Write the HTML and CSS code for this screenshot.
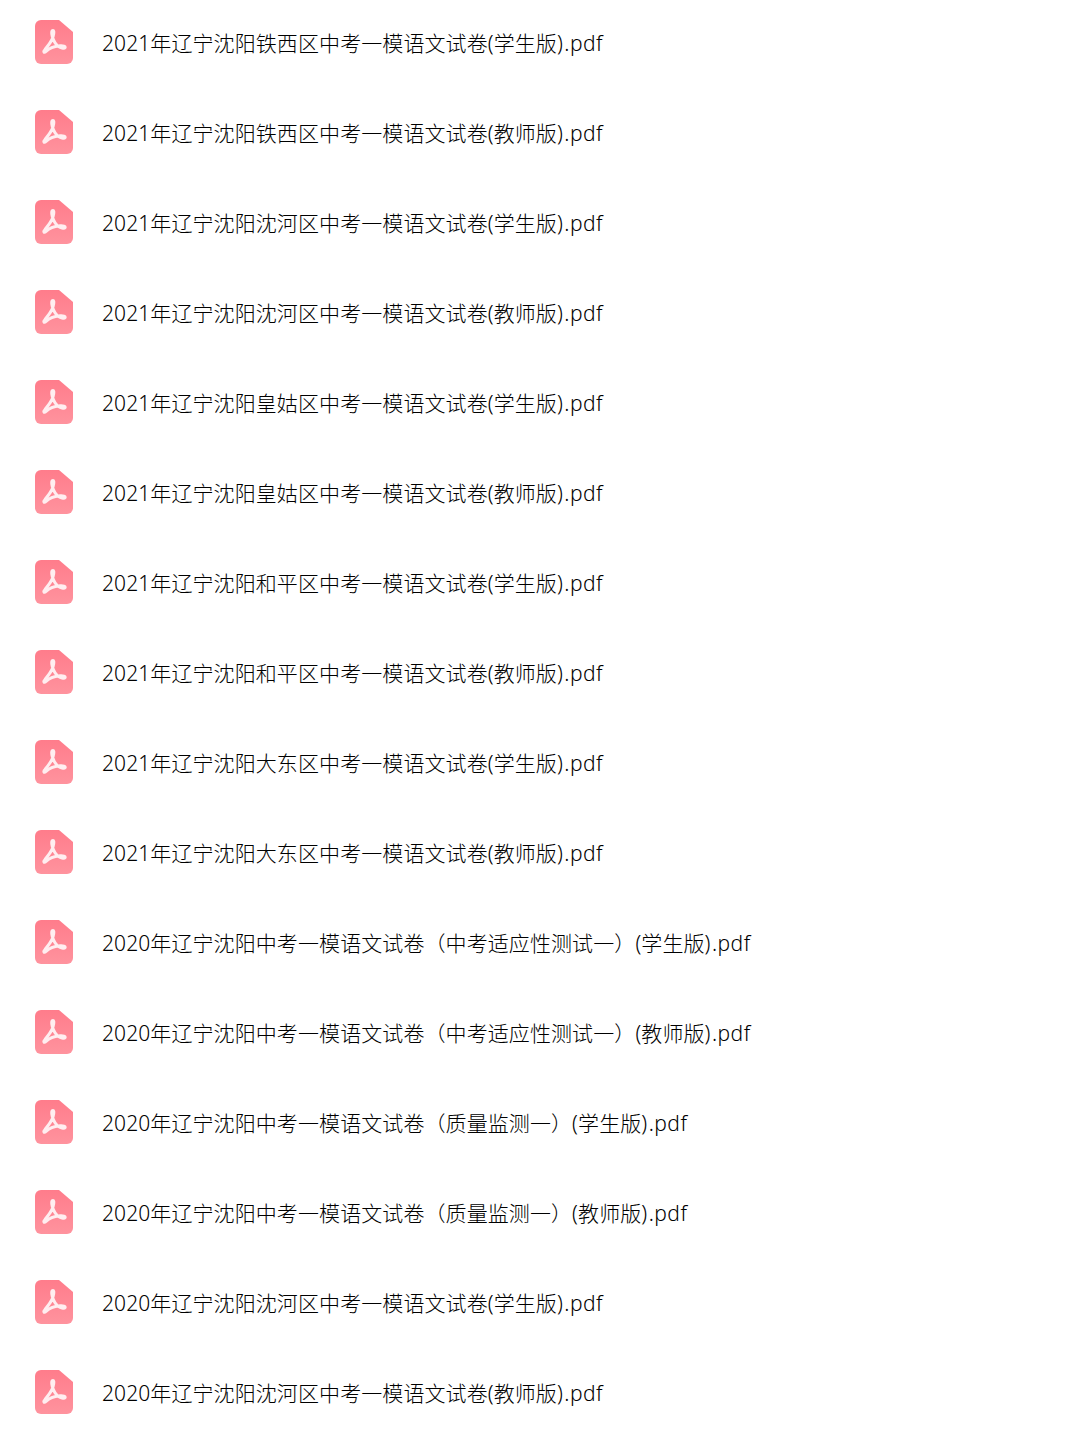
FILE: index.html
```html
<!DOCTYPE html>
<html lang="zh-CN">
<head>
    <meta charset="UTF-8">
    <title>2021年辽宁沈阳中考一模语文试卷</title>
    <link rel="stylesheet" href="styles.css">
</head>
<body>
    <svg class="defs" width="0" height="0">
        <defs>
            <linearGradient id="pdfBg" x1="0" y1="0" x2="0" y2="1">
                <stop offset="0" stop-color="#ff7c8b"/>
                <stop offset="1" stop-color="#ff939e"/>
            </linearGradient>
            <symbol id="pdf" viewBox="0 0 38 44">
                <path d="M6 0H24L38 12V38a6 6 0 0 1-6 6H6a6 6 0 0 1-6-6V6a6 6 0 0 1 6-6z" fill="url(#pdfBg)"/>
                <path d="M18 10.500C16.500 10.500 16.300 13 17.300 16.500C18.300 20 20 24 23.500 26.500C25.500 27.800 29 28.800 30 27.800C31 26.500 28 25.300 24.500 25.800C20 26.300 14 28.500 11 31.500C9 33.500 8 31.500 10 29.500C12 27 15 23.500 17 19.500C18.500 16.500 19.700 10.500 18 10.500Z" fill="none" stroke="#ffeef0" stroke-width="3" stroke-linejoin="round"/>
            </symbol>
        </defs>
    </svg>
    <ul class="file-list">
        <li class="file-row"><svg class="file-icon"><use href="#pdf"/></svg><span class="file-name">2021年辽宁沈阳铁西区中考一模语文试卷(学生版)<span class="file-ext">.pdf</span></span></li>
        <li class="file-row"><svg class="file-icon"><use href="#pdf"/></svg><span class="file-name">2021年辽宁沈阳铁西区中考一模语文试卷(教师版)<span class="file-ext">.pdf</span></span></li>
        <li class="file-row"><svg class="file-icon"><use href="#pdf"/></svg><span class="file-name">2021年辽宁沈阳沈河区中考一模语文试卷(学生版)<span class="file-ext">.pdf</span></span></li>
        <li class="file-row"><svg class="file-icon"><use href="#pdf"/></svg><span class="file-name">2021年辽宁沈阳沈河区中考一模语文试卷(教师版)<span class="file-ext">.pdf</span></span></li>
        <li class="file-row"><svg class="file-icon"><use href="#pdf"/></svg><span class="file-name">2021年辽宁沈阳皇姑区中考一模语文试卷(学生版)<span class="file-ext">.pdf</span></span></li>
        <li class="file-row"><svg class="file-icon"><use href="#pdf"/></svg><span class="file-name">2021年辽宁沈阳皇姑区中考一模语文试卷(教师版)<span class="file-ext">.pdf</span></span></li>
        <li class="file-row"><svg class="file-icon"><use href="#pdf"/></svg><span class="file-name">2021年辽宁沈阳和平区中考一模语文试卷(学生版)<span class="file-ext">.pdf</span></span></li>
        <li class="file-row"><svg class="file-icon"><use href="#pdf"/></svg><span class="file-name">2021年辽宁沈阳和平区中考一模语文试卷(教师版)<span class="file-ext">.pdf</span></span></li>
        <li class="file-row"><svg class="file-icon"><use href="#pdf"/></svg><span class="file-name">2021年辽宁沈阳大东区中考一模语文试卷(学生版)<span class="file-ext">.pdf</span></span></li>
        <li class="file-row"><svg class="file-icon"><use href="#pdf"/></svg><span class="file-name">2021年辽宁沈阳大东区中考一模语文试卷(教师版)<span class="file-ext">.pdf</span></span></li>
        <li class="file-row"><svg class="file-icon"><use href="#pdf"/></svg><span class="file-name">2020年辽宁沈阳中考一模语文试卷（中考适应性测试一）(学生版)<span class="file-ext">.pdf</span></span></li>
        <li class="file-row"><svg class="file-icon"><use href="#pdf"/></svg><span class="file-name">2020年辽宁沈阳中考一模语文试卷（中考适应性测试一）(教师版)<span class="file-ext">.pdf</span></span></li>
        <li class="file-row"><svg class="file-icon"><use href="#pdf"/></svg><span class="file-name">2020年辽宁沈阳中考一模语文试卷（质量监测一）(学生版)<span class="file-ext">.pdf</span></span></li>
        <li class="file-row"><svg class="file-icon"><use href="#pdf"/></svg><span class="file-name">2020年辽宁沈阳中考一模语文试卷（质量监测一）(教师版)<span class="file-ext">.pdf</span></span></li>
        <li class="file-row"><svg class="file-icon"><use href="#pdf"/></svg><span class="file-name">2020年辽宁沈阳沈河区中考一模语文试卷(学生版)<span class="file-ext">.pdf</span></span></li>
        <li class="file-row"><svg class="file-icon"><use href="#pdf"/></svg><span class="file-name">2020年辽宁沈阳沈河区中考一模语文试卷(教师版)<span class="file-ext">.pdf</span></span></li>
    </ul>
</body>
</html>
```
FILE: styles.css
```css
body {
    margin: 0;
    background: #fff;
    font-family: "Noto Sans", "Noto Sans CJK SC", sans-serif;
    color: #000;
}
.defs {
    display: block;
}
.file-list {
    list-style: none;
    margin: 0;
    padding: 0 0 0 35px;
}
.file-row {
    display: flex;
    align-items: center;
    gap: 29px;
    height: 90px;
    padding-bottom: 4px;
    box-sizing: border-box;
}
.file-icon {
    width: 38px;
    height: 44px;
    flex: none;
    margin-bottom: 2px;
}
.file-name {
    font-size: 21px;
    font-weight: 300;
    line-height: 30px;
    letter-spacing: 0.09px;
}
.file-ext {
    letter-spacing: 0.5px;
    margin-left: 1.4px;
}
```
